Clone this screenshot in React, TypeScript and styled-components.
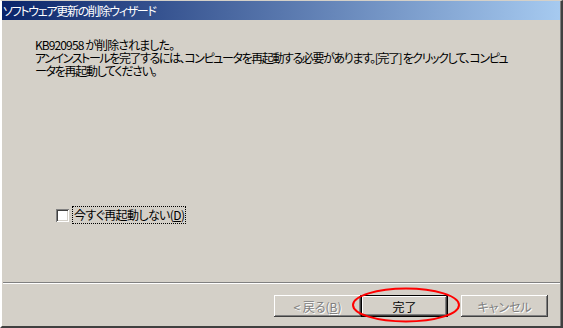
import React from "react";
import styled, { createGlobalStyle } from "styled-components";

const GlobalStyle = createGlobalStyle`
  html, body {
    margin: 0;
    padding: 0;
    background: #d4d0c8;
  }
  body {
    font-family: "Noto Sans CJK JP", "Liberation Sans", sans-serif;
    font-size: 12px;
  }
`;

const Window = styled.div`
  box-sizing: border-box;
  width: 563px;
  height: 328px;
  background: #d4d0c8;
  border-top: 1px solid #d4d0c8;
  border-left: 2px solid #ffffff;
  border-right: 2px solid #404040;
  border-bottom: 2px solid #404040;
  display: flex;
  flex-direction: column;
`;

const Inner = styled.div`
  flex: 1;
  display: flex;
  flex-direction: column;
  border-right: 1px solid #808080;
  min-height: 0;
`;

const TitleBar = styled.div`
  height: 19px;
  display: flex;
  align-items: center;
  padding-left: 1px;
  background: linear-gradient(to right, #0a246a, #a6caf0);
  color: #ffffff;
  font-size: 12px;
  font-feature-settings: "palt" 1;
  letter-spacing: -1.3px;
  white-space: nowrap;
`;

const Content = styled.div`
  height: 262px;
  box-sizing: border-box;
  padding: 18px 0 0 33px;
  display: flex;
  flex-direction: column;
`;

const Message = styled.div`
  display: flex;
  flex-direction: column;
  color: #000;
`;

const Line = styled.span<{ $spacing: number }>`
  display: block;
  height: 13px;
  font-size: 12px;
  line-height: 13px;
  font-feature-settings: "palt" 1;
  letter-spacing: ${p => p.$spacing}px;
  white-space: nowrap;
`;

const CheckRow = styled.label`
  margin-top: 130px;
  margin-left: 21px;
  display: flex;
  align-items: center;
  gap: 4px;
`;

const Box = styled.span`
  box-sizing: border-box;
  width: 13px;
  height: 13px;
  background: #fff;
  box-shadow: inset 1px 1px #808080, inset -1px -1px #ffffff,
    inset 2px 2px #404040, inset -2px -2px #d4d0c8;
`;

const Focus = styled.span`
  outline: 1px dotted #000;
  padding: 0 1px;
  line-height: 16px;
  font-size: 12px;
  font-feature-settings: "palt" 1;
  letter-spacing: -0.6px;
`;

const Separator = styled.div`
  margin-left: 1px;
  height: 0;
  border-top: 1px solid #808080;
  border-bottom: 1px solid #ffffff;
`;

const ButtonRow = styled.div`
  display: flex;
  justify-content: flex-end;
  padding: 11px 12px 0 0;
`;

const Group = styled.div`
  display: flex;
  margin-right: 13px;
`;

const Button = styled.button<{ $isDefault?: boolean }>`
  position: relative;
  box-sizing: border-box;
  width: 87px;
  height: 22px;
  padding: 0;
  background: #d4d0c8;
  border: ${p => (p.$isDefault ? "1px solid #000" : "none")};
  box-shadow: inset -1px -1px #404040, inset 1px 1px #ffffff,
    inset -2px -2px #808080, inset 2px 2px #d4d0c8;
  font-family: "Noto Sans CJK JP", "Liberation Sans", sans-serif;
  font-size: 12px;
  font-feature-settings: "palt" 1;
  color: ${p => (p.disabled ? "#808080" : "#000")};
  text-shadow: ${p => (p.disabled ? "1px 1px 0 #ffffff" : "none")};
`;

const Mark = styled.svg`
  position: absolute;
  left: -10px;
  top: -9px;
  width: 108px;
  height: 36px;
  overflow: visible;
  pointer-events: none;
`;

export default function App() {
  return (
    <>
      <GlobalStyle />
      <Window>
        <Inner>
          <TitleBar>ソフトウェア更新の削除ウィザード</TitleBar>
          <Content>
            <Message>
              <Line $spacing={-0.9}>KB920958 が削除されました。</Line>
              <Line $spacing={-1.4}>
                アンインストールを完了するには、コンピュータを再起動する必要があります。[完了] をクリックして、コンピュ
              </Line>
              <Line $spacing={-1.3}>ータを再起動してください。</Line>
            </Message>
            <CheckRow>
              <Box />
              <Focus>
                今すぐ再起動しない(<u>D</u>)
              </Focus>
            </CheckRow>
          </Content>
          <Separator />
          <ButtonRow>
            <Group>
              <Button disabled>&lt; 戻る(<u>B</u>)</Button>
              <Button $isDefault>
                完了
                <Mark viewBox="0 0 108 36">
                  <ellipse cx="54" cy="18" rx="53" ry="16.5" fill="none" stroke="#ff0000" strokeWidth="2" />
                </Mark>
              </Button>
            </Group>
            <Button disabled>キャンセル</Button>
          </ButtonRow>
        </Inner>
      </Window>
    </>
  );
}
